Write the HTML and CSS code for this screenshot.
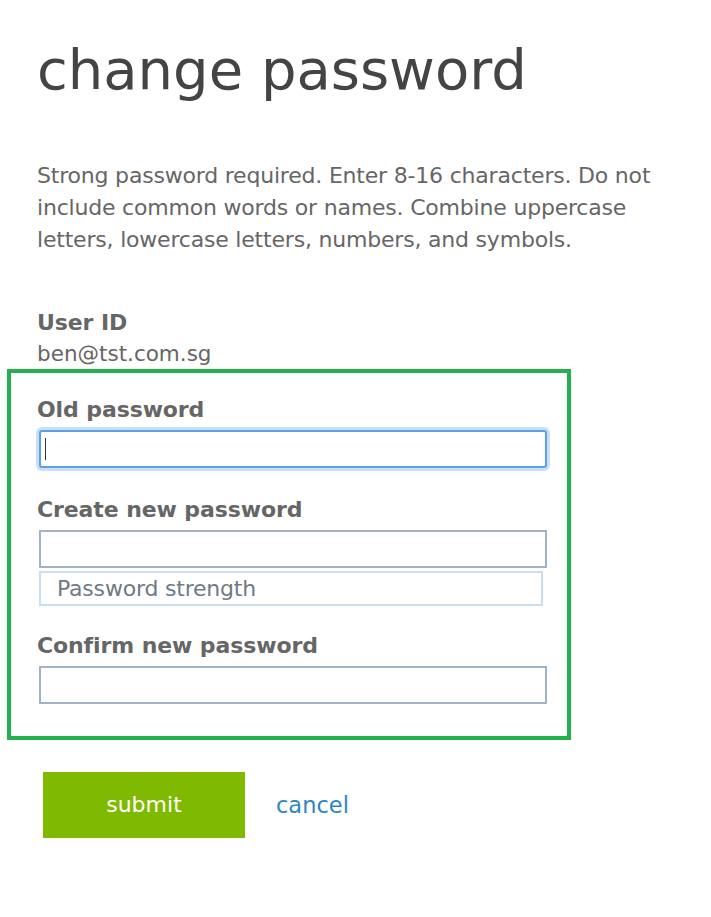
FILE: index.html
```html
<!DOCTYPE html>
<html>
<head>
<meta charset="utf-8">
<link rel="stylesheet" href="styles.css">
</head>
<body>
<div class="page">
  <h1 class="title">change password</h1>
  <p class="intro">Strong password required. Enter 8-16 characters. Do not include common words or names. Combine uppercase letters, lowercase letters, numbers, and symbols.</p>
  <div class="userid">
    <div class="label">User ID</div>
    <div class="value">ben@tst.com.sg</div>
  </div>
  <div class="box">
    <div class="field">
      <div class="label">Old password</div>
      <div class="input focused"><span class="caret"></span></div>
    </div>
    <div class="field">
      <div class="label">Create new password</div>
      <div class="input"></div>
      <div class="strength">Password strength</div>
    </div>
    <div class="field">
      <div class="label">Confirm new password</div>
      <div class="input"></div>
    </div>
  </div>
  <div class="actions">
    <div class="btn">submit</div>
    <a class="cancel" href="#">cancel</a>
  </div>
</div>
</body>
</html>
```
FILE: styles.css
```css
html, body {
  margin: 0;
  padding: 0;
  background: #fff;
}
body {
  font-family: "DejaVu Sans", Verdana, sans-serif;
  color: #666;
}
.page {
  padding: 0 0 0 7px;
  width: 564px;
}
.title {
  margin: 0;
  padding: 35px 0 0 30px;
  font-size: 56px;
  line-height: 70px;
  font-weight: normal;
  color: #444;
}
.intro {
  margin: 55px 0 0 0;
  padding-left: 30px;
  font-size: 22px;
  line-height: 32px;
  color: #666;
  width: 640px;
  letter-spacing: -0.2px;
}
.userid {
  margin-top: 51px;
  padding-left: 30px;
}
.label {
  font-weight: bold;
  font-size: 22px;
  line-height: 32px;
  color: #666;
  letter-spacing: -0.1px;
}
.value {
  font-size: 21.5px;
  line-height: 30px;
  color: #666;
}
.box {
  margin-top: 0;
  border: 4px solid #22b14c;
  padding: 21px 0 0 26px;
  height: 371px;
  box-sizing: border-box;
  width: 564px;
}
.box .field:nth-child(2) {
  margin-top: 26px;
}
.box .field:nth-child(3) {
  margin-top: 24px;
}
.input {
  margin-left: 2px;
  margin-top: 4px;
  width: 508px;
  height: 38px;
  box-sizing: border-box;
  border: 2px solid #9fb3c4;
  background: #fff;
}
.input.focused {
  border-color: #5c9fea;
  border-radius: 3px;
  box-shadow: 0 0 0 3px #c9e0fb;
  position: relative;
}
.caret {
  position: absolute;
  left: 4px;
  top: 6px;
  width: 1px;
  height: 22px;
  background: #333;
}
.strength {
  margin: 3px 0 0 2px;
  width: 504px;
  height: 35px;
  box-sizing: border-box;
  border: 2px solid #c9def0;
  padding-left: 16px;
  font-size: 22px;
  line-height: 31px;
  color: #6f7a82;
  letter-spacing: -0.2px;
}
.actions {
  display: flex;
  align-items: center;
  margin-top: 32px;
  padding-left: 36px;
}
.btn {
  width: 202px;
  height: 66px;
  background: #7fba00;
  color: #fff;
  font-size: 22px;
  line-height: 66px;
  text-align: center;
}
.cancel {
  margin-left: 31px;
  font-size: 22.5px;
  color: #2e86c1;
  text-decoration: none;
}
```
